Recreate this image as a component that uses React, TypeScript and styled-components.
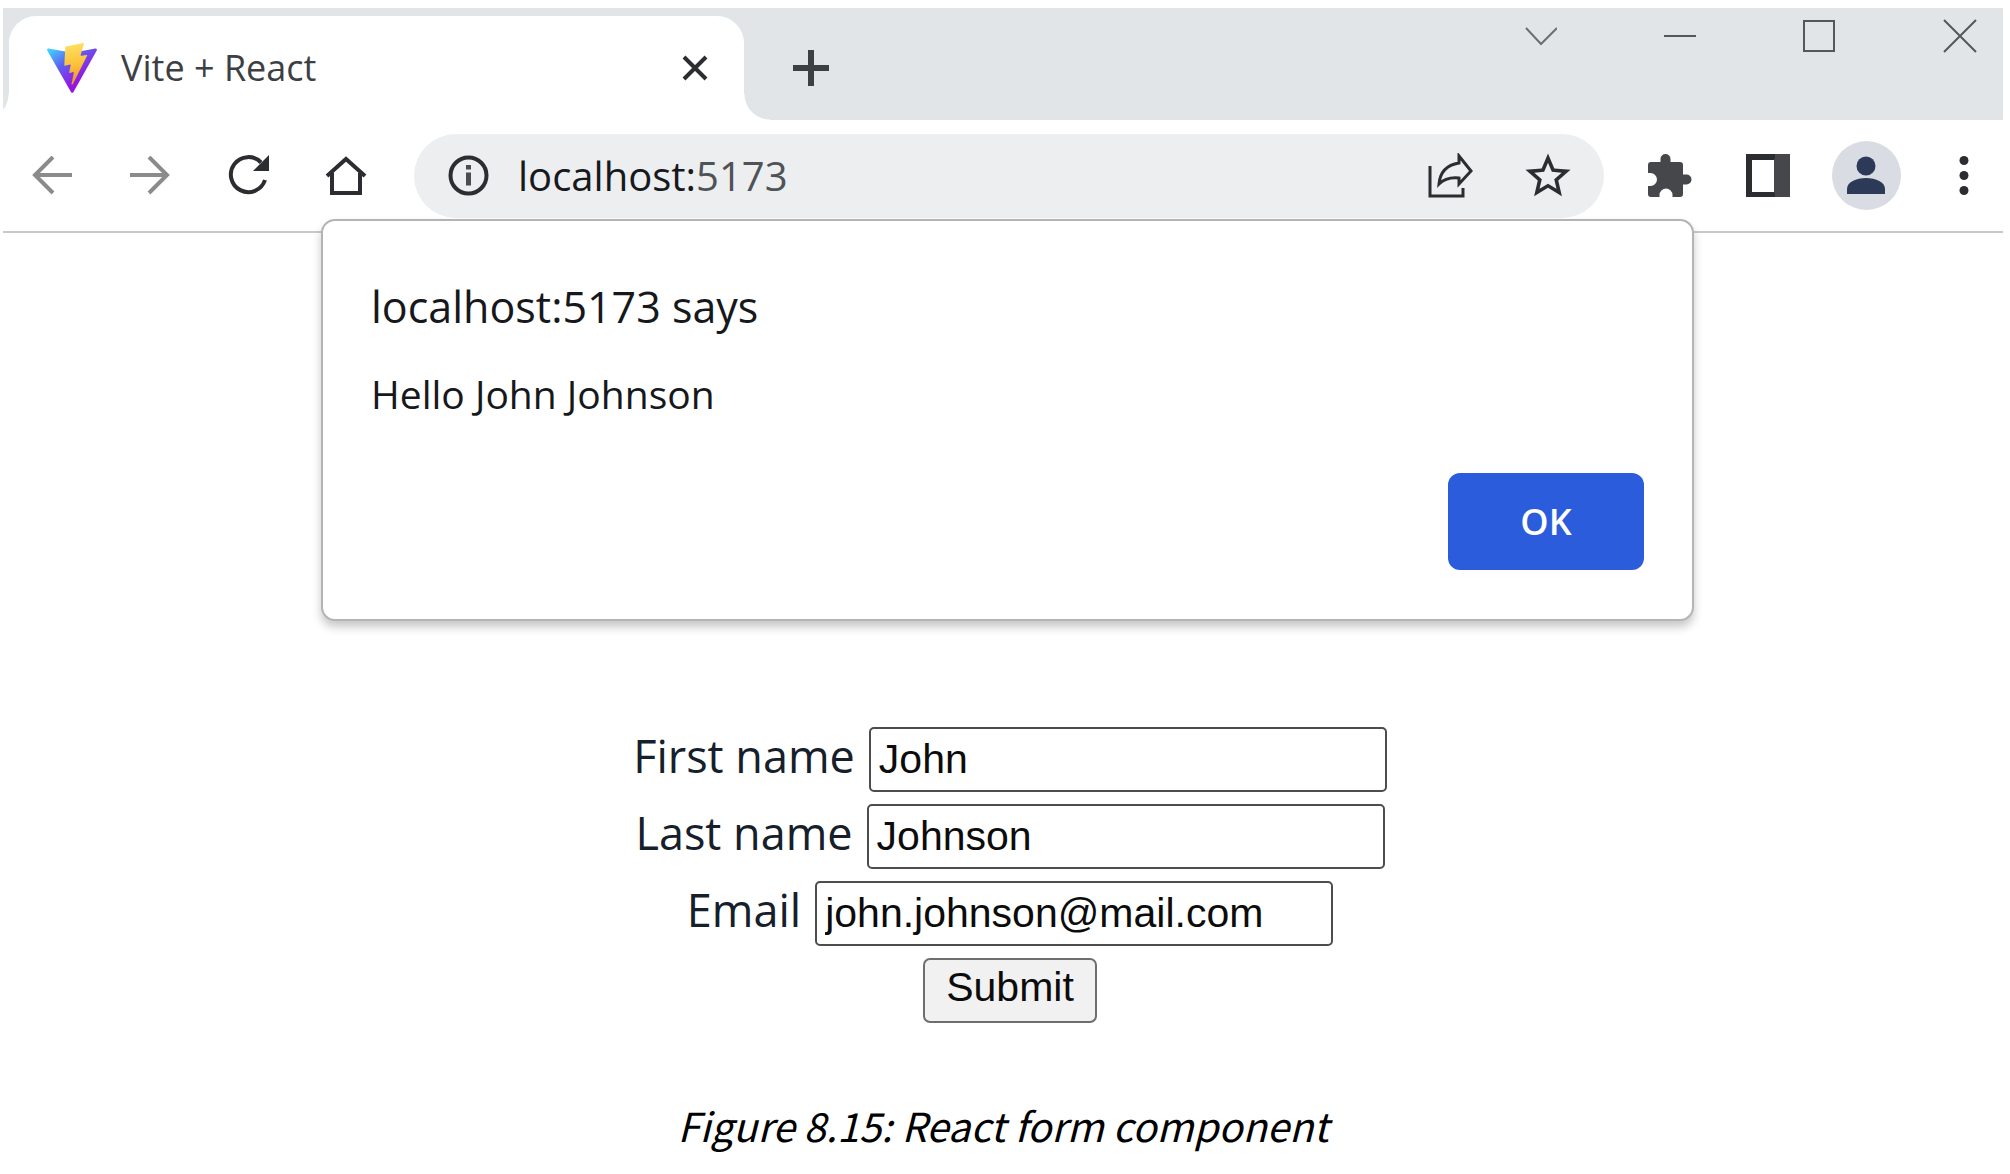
import { useState } from 'react';
import type { FormEvent } from 'react';
import styled, { createGlobalStyle } from 'styled-components';
import { MdStarBorder } from 'react-icons/md';

const GlobalStyle = createGlobalStyle`
  *, *::before, *::after { box-sizing: border-box; }
  body {
    margin: 0;
    background: #fff;
    font-family: 'Open Sans', 'Noto Sans', sans-serif;
  }
  button { font-family: inherit; }
`;

const Figure = styled.figure`
  margin: 0;
  padding: 8px 7px 0 3px;
`;

const Browser = styled.div`
  position: relative;
`;

const TabStrip = styled.header`
  display: flex;
  align-items: stretch;
  height: 112px;
  padding: 8px 26px 0 6px;
  background: #e1e5e8;
  overflow: hidden;
`;

const Tab = styled.div`
  position: relative;
  display: flex;
  align-items: center;
  flex: 0 1 735px;
  padding: 0 32px 0 38px;
  background: #fff;
  border-radius: 27px 27px 0 0;

  &::before,
  &::after {
    content: '';
    position: absolute;
    bottom: 0;
    width: 26px;
    height: 26px;
  }
  &::before {
    right: 100%;
    background: radial-gradient(circle at 0 0, transparent 25px, #fff 26px);
  }
  &::after {
    left: 100%;
    background: radial-gradient(circle at 100% 0, transparent 25px, #fff 26px);
  }
`;

const TabTitle = styled.span`
  flex: 1;
  margin-left: 24px;
  color: #3c4043;
  font-size: 36px;
  line-height: 50px;
  white-space: nowrap;
`;

const IconButton = styled.button<{ $width?: number; $color?: string }>`
  display: flex;
  align-items: center;
  justify-content: center;
  flex: none;
  width: ${(p) => (p.$width ? `${p.$width}px` : 'auto')};
  padding: 0;
  border: 0;
  background: none;
  color: ${(p) => p.$color ?? '#2b2d30'};
`;

const NewTab = styled(IconButton)`
  margin-left: 44px;
`;

const WindowControls = styled.div`
  display: flex;
  align-items: flex-start;
  gap: 106px;
  margin-left: auto;
  padding-top: 3px;
`;

const Toolbar = styled.nav`
  display: flex;
  align-items: center;
  height: 113px;
  border-bottom: 2px solid #c9c9c9;
`;

const AddressBar = styled.div`
  display: flex;
  align-items: center;
  flex: 1;
  height: 84px;
  margin: 0 17px 0 19px;
  padding: 0 29px 0 34px;
  border-radius: 42px;
  background: #eceeef;
`;

const Address = styled.div`
  flex: 1;
  margin-left: 29px;
  color: #17191c;
  font-size: 40px;
  line-height: 56px;
`;

const Port = styled.span`
  color: #4f5257;
`;

const AddressActions = styled.div`
  display: flex;
  align-items: center;
  gap: 48px;
`;

const Avatar = styled.span`
  display: flex;
  align-items: center;
  justify-content: center;
  width: 69px;
  height: 69px;
  border-radius: 50%;
  background: #d9dce3;
`;

const MenuButton = styled(IconButton)`
  padding-left: 10px;
`;

const Dialog = styled.section`
  position: absolute;
  top: 211px;
  left: 318px;
  right: 309px;
  display: flex;
  flex-direction: column;
  padding: 56px 48px 49px;
  border: 2px solid #b4b4b4;
  border-radius: 14px;
  background: #fff;
  box-shadow: 0 6px 10px rgba(0, 0, 0, 0.22);
`;

const DialogTitle = styled.h1`
  margin: 0;
  color: #16181b;
  font-size: 43px;
  font-weight: 400;
  line-height: 60px;
`;

const DialogMessage = styled.p`
  margin: 32px 0 54px;
  color: #16181b;
  font-size: 39px;
  line-height: 50px;
`;

const OkButton = styled.button`
  align-self: flex-end;
  width: 196px;
  height: 97px;
  border: 0;
  border-radius: 12px;
  background: #2a5cdc;
  color: #fff;
  font-size: 36px;
  font-weight: 600;
  line-height: 50px;
`;

const Page = styled.main`
  padding: 494px 0 0 14px;
`;

const Form = styled.form`
  display: flex;
  flex-direction: column;
  align-items: center;
  gap: 12px;
`;

const Field = styled.div`
  display: flex;
  align-items: baseline;
  gap: 14px;
`;

const Label = styled.label`
  color: #15202b;
  font-size: 45px;
  line-height: 50px;
`;

const TextInput = styled.input`
  width: 518px;
  height: 65px;
  padding: 0 8px;
  border: 2px solid #4d4d4d;
  border-radius: 5px;
  outline: 0;
  background: #fff;
  color: #0c0c0c;
  font-family: 'Liberation Sans', Arial, sans-serif;
  font-size: 41px;
`;

const SubmitButton = styled.button`
  height: 65px;
  padding: 0 21px 6px;
  border: 2px solid #6e6e6e;
  border-radius: 7px;
  background: #f1f1f1;
  color: #0c0c0c;
  font-family: 'Liberation Sans', Arial, sans-serif;
  font-size: 41px;
`;

const Caption = styled.figcaption`
  margin-top: 72px;
  color: #000;
  font-family: 'Noto Sans CJK SC', 'Noto Sans', sans-serif;
  font-size: 40px;
  font-style: italic;
  line-height: 60px;
  text-align: center;
`;

const ViteLogo = () => (
  <svg width="50" height="50" viewBox="0 0 256 257" aria-hidden="true">
    <defs>
      <linearGradient id="viteBody" x1="-.8%" x2="57.6%" y1="7.7%" y2="78.4%">
        <stop offset="0%" stopColor="#41D1FF" />
        <stop offset="45%" stopColor="#5d62ee" />
        <stop offset="100%" stopColor="#9614e0" />
      </linearGradient>
      <linearGradient id="viteBolt" x1="43.4%" x2="50.3%" y1="2.2%" y2="89%">
        <stop offset="0%" stopColor="#FFDF62" />
        <stop offset="60%" stopColor="#FBBF38" />
        <stop offset="100%" stopColor="#F0982F" />
      </linearGradient>
    </defs>
    <path
      fill="url(#viteBody)"
      d="M255.153 37.938L134.897 252.976c-2.483 4.44-8.862 4.466-11.382.048L.875 37.958c-2.746-4.814 1.371-10.646 6.827-9.67l120.385 21.517a6.537 6.537 0 0 0 2.322-.004l117.867-21.483c5.438-.991 9.574 4.796 6.877 9.62Z"
    />
    <path
      fill="url(#viteBolt)"
      d="M185.432.063L96.44 17.501a3.268 3.268 0 0 0-2.634 3.014l-5.474 92.456a3.268 3.268 0 0 0 3.997 3.378l24.777-5.718c2.318-.535 4.413 1.507 3.936 3.838l-7.361 36.047c-.495 2.426 1.782 4.5 4.151 3.78l15.304-4.649c2.372-.72 4.652 1.36 4.15 3.788l-11.698 56.621c-.732 3.542 3.979 5.473 5.943 2.437l1.313-2.028l72.516-144.72c1.215-2.423-.88-5.186-3.54-4.672l-25.505 4.922c-2.396.462-4.435-1.77-3.759-4.114l16.646-57.705c.677-2.35-1.37-4.583-3.769-4.113Z"
    />
  </svg>
);

/** Stroke-only icon drawn on a square or rectangular grid of its own pixels. */
const LineIcon = ({ w, h, d, stroke }: { w: number; h: number; d: string; stroke: number }) => (
  <svg width={w} height={h} viewBox={`0 0 ${w} ${h}`} fill="none" stroke="currentColor" strokeWidth={stroke} aria-hidden="true">
    <path d={d} />
  </svg>
);

const ReloadIcon = () => (
  <svg width="44" height="44" viewBox="0 0 44 44" aria-hidden="true">
    <path d="M39 26A17.5 17.5 0 1 1 35 8.5" fill="none" stroke="currentColor" strokeWidth="4" />
    <path d="M43 1v16H27Z" fill="currentColor" />
  </svg>
);

const InfoIcon = () => (
  <svg width="41" height="41" viewBox="0 0 41 41" aria-hidden="true">
    <circle cx="20.5" cy="20.5" r="18" fill="none" stroke="#2b2d30" strokeWidth="4" />
    <path d="M18 10h5v4.500h-5zM18 17.500h5v13h-5z" fill="#4a4c50" />
  </svg>
);

const PuzzleIcon = () => (
  <svg width="44" height="44" viewBox="0 0 44 44" fill="currentColor" aria-hidden="true">
    <path d="M3 8H12.500V5a5 5 0 0 1 10 0V8H32a3 3 0 0 1 3 3V20.500h3.500a5 5 0 0 1 0 10H35V40a3 3 0 0 1-3 3H24.500v-2a6.500 6.500 0 0 0-13 0v2H3a3 3 0 0 1-3-3V32h2.500a6.500 6.500 0 0 0 0-13H0V11a3 3 0 0 1 3-3Z" />
  </svg>
);

const SidePanelIcon = () => (
  <svg width="44" height="44" viewBox="0 0 44 44" aria-hidden="true">
    <path d="M0 0h44v43H0z" fill="#45474b" />
    <path d="M0 0h29v43H0z" fill="#2b2d30" />
    <path d="M6 6h22v32H6z" fill="#fff" />
    <path d="M28 5h2v34h-2z" fill="#45474b" />
  </svg>
);

const PersonIcon = () => (
  <svg width="40" height="40" viewBox="0 0 40 40" fill="#2d3a57" aria-hidden="true">
    <circle cx="20" cy="10" r="9.500" />
    <path d="M1 38v-5c0-7 9-11 19-11s19 4 19 11v5Z" />
  </svg>
);

const MenuIcon = () => (
  <svg width="12" height="42" viewBox="0 0 12 42" fill="currentColor" aria-hidden="true">
    <circle cx="6" cy="5.500" r="4.500" />
    <circle cx="6" cy="20.500" r="4.500" />
    <circle cx="6" cy="35.500" r="4.500" />
  </svg>
);

const FIELDS = [
  { name: 'firstName', label: 'First name' },
  { name: 'lastName', label: 'Last name' },
  { name: 'email', label: 'Email' },
] as const;

export default function App() {
  const [open, setOpen] = useState(true);
  const [user, setUser] = useState({
    firstName: 'John',
    lastName: 'Johnson',
    email: 'john.johnson@mail.com',
  });

  const handleSubmit = (event: FormEvent) => {
    event.preventDefault();
    setOpen(true);
  };

  return (
    <Figure>
      <GlobalStyle />
      <Browser>
        <TabStrip>
          <Tab>
            <ViteLogo />
            <TabTitle>Vite + React</TabTitle>
            <IconButton aria-label="Close tab">
              <LineIcon w={34} h={34} stroke={4} d="M6 6L28 28M28 6L6 28" />
            </IconButton>
          </Tab>
          <NewTab aria-label="New tab" $color="#3d4043">
            <LineIcon w={46} h={46} stroke={6} d="M23 5V41M5 23H41" />
          </NewTab>
          <WindowControls>
            <IconButton aria-label="Search tabs" $color="#6b6e72">
              <LineIcon w={34} h={34} stroke={2} d="M3 9L18 25L34 9" />
            </IconButton>
            <IconButton aria-label="Minimize" $color="#54575b">
              <LineIcon w={34} h={34} stroke={2} d="M1 17H33" />
            </IconButton>
            <IconButton aria-label="Maximize" $color="#54575b">
              <LineIcon w={34} h={34} stroke={2} d="M1 2H31V32H1Z" />
            </IconButton>
            <IconButton aria-label="Close window" $color="#54575b">
              <LineIcon w={34} h={34} stroke={2} d="M1 1L33 33M33 1L1 33" />
            </IconButton>
          </WindowControls>
        </TabStrip>

        <Toolbar>
          <IconButton aria-label="Back" $width={98} $color="#8b8b8b">
            <LineIcon w={40} h={40} stroke={4} d="M40 19H4M21 1L3 19L21 37" />
          </IconButton>
          <IconButton aria-label="Forward" $width={98} $color="#8b8b8b">
            <LineIcon w={40} h={40} stroke={4} d="M0 19H36M19 1L37 19L19 37" />
          </IconButton>
          <IconButton aria-label="Reload" $width={98}>
            <ReloadIcon />
          </IconButton>
          <IconButton aria-label="Home" $width={98}>
            <LineIcon w={42} h={42} stroke={4} d="M2 21L21 4L40 21M7 18V38H35V18" />
          </IconButton>
          <AddressBar>
            <InfoIcon />
            <Address>
              localhost:<Port>5173</Port>
            </Address>
            <AddressActions>
              <IconButton aria-label="Share">
                <LineIcon
                  w={46}
                  h={46}
                  stroke={3}
                  d="M3 13V43H36V35M32 3L44 18L32 31V25C22 24 16 27 12 31C13 19 20 12 32 10Z"
                />
              </IconButton>
              <IconButton aria-label="Bookmark this page">
                <MdStarBorder size={54} />
              </IconButton>
            </AddressActions>
          </AddressBar>
          <IconButton aria-label="Extensions" $width={98} $color="#45474b">
            <PuzzleIcon />
          </IconButton>
          <IconButton aria-label="Side panel" $width={98}>
            <SidePanelIcon />
          </IconButton>
          <IconButton aria-label="Profile" $width={98}>
            <Avatar>
              <PersonIcon />
            </Avatar>
          </IconButton>
          <MenuButton aria-label="Menu" $width={88}>
            <MenuIcon />
          </MenuButton>
        </Toolbar>

        <Page>
          <Form onSubmit={handleSubmit}>
            {FIELDS.map((field) => (
              <Field key={field.name}>
                <Label htmlFor={field.name}>{field.label}</Label>
                <TextInput
                  id={field.name}
                  name={field.name}
                  value={user[field.name]}
                  onChange={(event) => setUser({ ...user, [field.name]: event.target.value })}
                />
              </Field>
            ))}
            <SubmitButton type="submit">Submit</SubmitButton>
          </Form>
        </Page>

        {open && (
          <Dialog role="alertdialog" aria-labelledby="alert-title" aria-describedby="alert-message">
            <DialogTitle id="alert-title">localhost:5173 says</DialogTitle>
            <DialogMessage id="alert-message">
              Hello {user.firstName} {user.lastName}
            </DialogMessage>
            <OkButton onClick={() => setOpen(false)}>OK</OkButton>
          </Dialog>
        )}
      </Browser>
      <Caption>Figure 8.15: React form component</Caption>
    </Figure>
  );
}
